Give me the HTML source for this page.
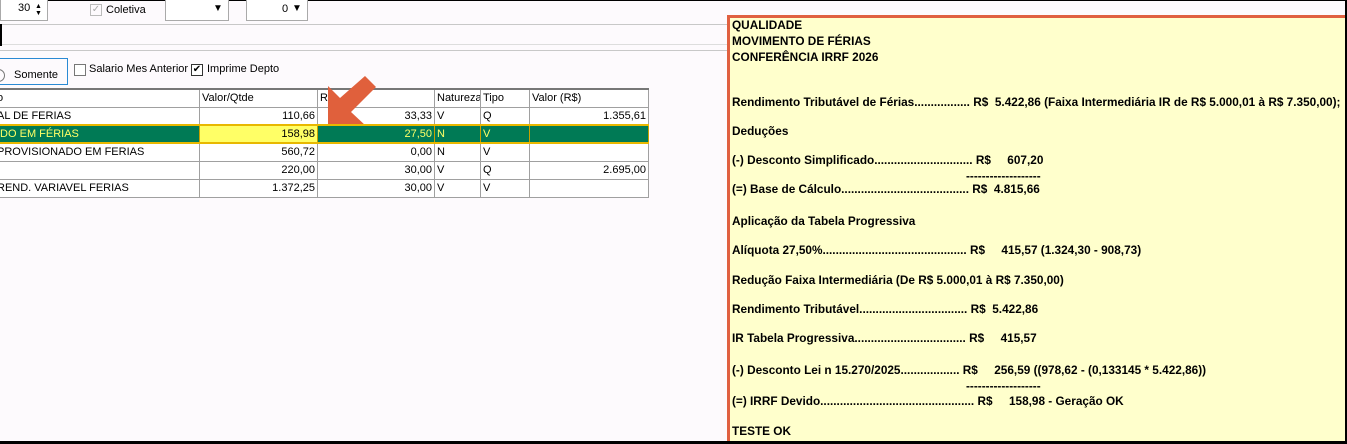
<!DOCTYPE html>
<html><head><meta charset="utf-8">
<style>
*{margin:0;padding:0;box-sizing:border-box}
html,body{width:1347px;height:444px;overflow:hidden}
body{position:relative;background:#fdfafd;font-family:"Liberation Sans",sans-serif;font-size:11px;color:#000}
.a{position:absolute}
.hl{position:absolute;height:1px;background:#c8c8c8}
table{border-collapse:collapse;position:absolute;left:-1px;top:88px;table-layout:fixed;background:#fff;width:649px}
td{border:1px solid #a0a0a0;height:18px;padding:0 2px;white-space:nowrap;overflow:hidden;font-size:11px;line-height:16px}
td.f{padding-left:0;text-indent:-3px}
tr.h td{background:#fff;border-top:2px solid #777}
.r{text-align:right}
tr.sel td{background:#007a55;color:#ffff66;border-top:2px solid #e8b800;border-bottom:2px solid #e8b800;border-left:1px solid #c8a000;border-right:1px solid #c8a000}
tr.sel td.y{background:#ffff66;color:#000}
#box{position:absolute;left:727px;top:15px;width:620px;height:429px;background:#ffffcc;border-left:3px solid #e06040;border-top:3px solid #e06040}
.t{position:absolute;left:732px;font-family:"Liberation Sans Narrow","Liberation Sans",sans-serif;font-weight:bold;font-size:11.8px;white-space:pre;line-height:14px}
</style></head><body>
<div class="a" style="left:0;top:0;width:1347px;height:1px;background:#000"></div>
<div class="a" style="left:0;top:0;width:48px;height:21px;border:1px solid #aaa;border-top:none;background:#fff"></div>
<div class="a" style="left:18px;top:2px">30</div>
<div class="a" style="left:35px;top:3px;font-size:7px;line-height:7px">▲<br>▼</div>
<div class="a" style="left:90px;top:4px;width:12px;height:12px;border:1px solid #bbb;color:#aaa;font-size:10px;line-height:10px;text-align:center">✓</div>
<div class="a" style="left:106px;top:4px">Coletiva</div>
<div class="a" style="left:165px;top:0;width:64px;height:21px;border:1px solid #aaa;border-top:none;background:#fff"></div>
<div class="a" style="left:213px;top:3px;font-size:10px">▼</div>
<div class="a" style="left:246px;top:0;width:62px;height:21px;border:1px solid #aaa;border-top:none;background:#fff"></div>
<div class="a" style="left:282px;top:3px">0</div>
<div class="a" style="left:292px;top:3px;font-size:10px">▼</div>
<div class="hl" style="left:0;top:24px;width:727px"></div>
<div class="hl" style="left:0;top:44px;width:727px;background:#ddd"></div>
<div class="hl" style="left:0;top:50px;width:727px"></div>
<div class="a" style="left:0;top:24px;width:2px;height:22px;background:#000"></div>
<div class="a" style="left:-2px;top:58px;width:70px;height:27px;border:1px solid #2a8ad4"></div>
<div class="a" style="left:-8px;top:69px;width:13px;height:13px;border:1px solid #777;border-radius:50%"></div>
<div class="a" style="left:14px;top:69px">Somente</div>
<div class="a" style="left:74px;top:64px;width:12px;height:12px;border:1px solid #777;background:#fff"></div>
<div class="a" style="left:89px;top:63px">Salario Mes Anterior</div>
<div class="a" style="left:191px;top:64px;width:12px;height:12px;border:1px solid #333;background:#fff;font-size:10px;line-height:10px;text-align:center">✔</div>
<div class="a" style="left:207px;top:63px">Imprime Depto</div>
<table>
<colgroup><col style="width:200px"><col style="width:118px"><col style="width:117px"><col style="width:46px"><col style="width:49px"><col style="width:119px"></colgroup>
<tr class="h"><td class="f">o</td><td>Valor/Qtde</td><td>R</td><td>Natureza</td><td>Tipo</td><td>Valor (R$)</td></tr>
<tr><td class="f">AL DE FERIAS</td><td class="r">110,66</td><td class="r">33,33</td><td>V</td><td>Q</td><td class="r">1.355,61</td></tr>
<tr class="sel"><td class="f">IDO EM FÉRIAS</td><td class="r y">158,98</td><td class="r">27,50</td><td>N</td><td>V</td><td></td></tr>
<tr><td class="f">PROVISIONADO EM FERIAS</td><td class="r">560,72</td><td class="r">0,00</td><td>N</td><td>V</td><td></td></tr>
<tr><td class="f"></td><td class="r">220,00</td><td class="r">30,00</td><td>V</td><td>Q</td><td class="r">2.695,00</td></tr>
<tr><td class="f">REND. VARIAVEL  FERIAS</td><td class="r">1.372,25</td><td class="r">30,00</td><td>V</td><td>V</td><td></td></tr>
</table>
<svg class="a" style="left:0;top:0" width="727" height="124"><polygon points="328,86 340,98 365,76 376,87 351,112 366,126 328,126" fill="#e0603c"/></svg>
<div id="box"></div>
<div class="t" style="top:18px">QUALIDADE</div>
<div class="t" style="top:34px">MOVIMENTO DE FÉRIAS</div>
<div class="t" style="top:50px">CONFERÊNCIA IRRF 2026</div>
<div class="t" style="top:95px">Rendimento Tributável de Férias................. R$  5.422,86 (Faixa Intermediária IR de R$ 5.000,01 à R$ 7.350,00);</div>
<div class="t" style="top:124px">Deduções</div>
<div class="t" style="top:153px">(-) Desconto Simplificado.............................. R$     607,20</div>
<div class="t" style="top:169px;left:966px">-------------------</div>
<div class="t" style="top:182px">(=) Base de Cálculo....................................... R$  4.815,66</div>
<div class="t" style="top:214px">Aplicação da Tabela Progressiva</div>
<div class="t" style="top:243px">Alíquota 27,50%............................................ R$     415,57 (1.324,30 - 908,73)</div>
<div class="t" style="top:273px">Redução Faixa Intermediária (De R$ 5.000,01 à R$ 7.350,00)</div>
<div class="t" style="top:302px">Rendimento Tributável................................. R$  5.422,86</div>
<div class="t" style="top:331px">IR Tabela Progressiva.................................. R$     415,57</div>
<div class="t" style="top:363px">(-) Desconto Lei n 15.270/2025.................. R$     256,59 ((978,62 - (0,133145 * 5.422,86))</div>
<div class="t" style="top:379px;left:966px">-------------------</div>
<div class="t" style="top:394px">(=) IRRF Devido............................................... R$     158,98 - Geração OK</div>
<div class="t" style="top:424px">TESTE OK</div>
<div class="a" style="left:1345px;top:0;width:2px;height:444px;background:#000"></div>
<div class="a" style="left:0;top:441px;width:1347px;height:3px;background:#000"></div>
</body></html>
